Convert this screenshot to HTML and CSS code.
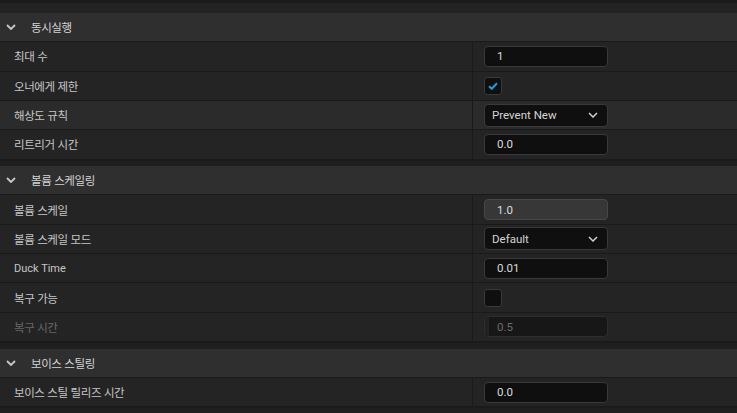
FILE: index.html
```html
<!DOCTYPE html>
<html lang="ko">
<head>
<meta charset="utf-8">
<title>Details</title>
<link rel="stylesheet" href="styles.css">
</head>
<body>
<div class="panel">
  <div class="topbar"></div>

  <section class="group">
    <div class="group-head">
      <svg class="chev" viewBox="0 0 10 6" width="10" height="6"><path d="M1 1 L5 5 L9 1" fill="none" stroke="#c8c8c8" stroke-width="1.8"/></svg>
      <span class="ko">동시실행</span>
    </div>
    <div class="row">
      <div class="name ko">최대 수</div>
      <div class="value"><div class="field">1</div></div>
    </div>
    <div class="row">
      <div class="name ko">오너에게 제한</div>
      <div class="value"><div class="check on"><svg viewBox="0 0 10 8" width="10" height="8"><path d="M1 4.2 L3.8 6.8 L9 1.3" fill="none" stroke="#2a9ad6" stroke-width="2"/></svg></div></div>
    </div>
    <div class="row hover">
      <div class="name ko">해상도 규칙</div>
      <div class="value"><div class="combo"><span>Prevent New</span><svg viewBox="0 0 10 6" width="10" height="6"><path d="M1 1 L5 5 L9 1" fill="none" stroke="#cfcfcf" stroke-width="1.5"/></svg></div></div>
    </div>
    <div class="row">
      <div class="name ko">리트리거 시간</div>
      <div class="value"><div class="field">0.0</div></div>
    </div>
  </section>

  <div class="spacer"></div>

  <section class="group">
    <div class="group-head">
      <svg class="chev" viewBox="0 0 10 6" width="10" height="6"><path d="M1 1 L5 5 L9 1" fill="none" stroke="#c8c8c8" stroke-width="1.8"/></svg>
      <span class="ko">볼륨 스케일링</span>
    </div>
    <div class="row">
      <div class="name ko">볼륨 스케일</div>
      <div class="value"><div class="field locked">1.0</div></div>
    </div>
    <div class="row">
      <div class="name ko">볼륨 스케일 모드</div>
      <div class="value"><div class="combo"><span>Default</span><svg viewBox="0 0 10 6" width="10" height="6"><path d="M1 1 L5 5 L9 1" fill="none" stroke="#cfcfcf" stroke-width="1.5"/></svg></div></div>
    </div>
    <div class="row">
      <div class="name latin">Duck Time</div>
      <div class="value"><div class="field">0.01</div></div>
    </div>
    <div class="row">
      <div class="name ko">복구 가능</div>
      <div class="value"><div class="check"></div></div>
    </div>
    <div class="row">
      <div class="name ko disabled">복구 시간</div>
      <div class="value"><div class="field off">0.5</div></div>
    </div>
  </section>

  <div class="spacer"></div>

  <section class="group">
    <div class="group-head">
      <svg class="chev" viewBox="0 0 10 6" width="10" height="6"><path d="M1 1 L5 5 L9 1" fill="none" stroke="#c8c8c8" stroke-width="1.8"/></svg>
      <span class="ko">보이스 스틸링</span>
    </div>
    <div class="row">
      <div class="name ko">보이스 스틸 릴리즈 시간</div>
      <div class="value"><div class="field">0.0</div></div>
    </div>
  </section>
  <div class="spacer"></div>
</div>
</body>
</html>
```

FILE: styles.css
```css
html, body {
  margin: 0;
  padding: 0;
  background: #1d1d1d;
  height: 100%;
  overflow: hidden;
}

.panel {
  font-family: Roboto, "Noto Sans CJK KR", sans-serif;
  font-size: 12px;
  color: #c6c6c6;
  display: flex;
  flex-direction: column;
}

.topbar {
  height: 13px;
  box-sizing: border-box;
  border-top: 3px solid #1b1b1b;
  background: #232323;
}

.ko {
  font-family: "Noto Sans CJK KR", sans-serif;
  font-size: 11.5px;
  letter-spacing: -0.4px;
}

.latin {
  font-family: Roboto, sans-serif;
  font-size: 11px;
}

.group {
  display: flex;
  flex-direction: column;
}

.group-head {
  height: 29.333px;
  box-sizing: border-box;
  border-bottom: 1px solid #1a1a1a;
  background: #2f2f2f;
  display: flex;
  align-items: center;
  color: #d4d4d4;
}

.chev {
  margin-left: 6px;
  margin-right: 15px;
}

.row {
  height: 29.333px;
  box-sizing: border-box;
  border-bottom: 1px solid #1a1a1a;
  background: #242424;
  display: grid;
  grid-template-columns: 473px 1fr;
}

.row.hover {
  background: #2b2b2b;
}

.name {
  display: flex;
  align-items: center;
  padding-left: 14px;
  border-right: 1px solid #1a1a1a;
  color: #c6c6c6;
}

.name.disabled {
  color: #676767;
}

.value {
  display: flex;
  align-items: center;
  padding-left: 11px;
}

.field {
  width: 124px;
  height: 21px;
  box-sizing: border-box;
  background: #0f0f0f;
  border: 1px solid #393939;
  border-radius: 4px;
  display: flex;
  align-items: center;
  padding-left: 12px;
  color: #dcdcdc;
  font-family: Roboto, sans-serif;
  font-size: 11.5px;
  position: relative;
}

.field.locked {
  background: #373737;
  border-color: #474747;
}

.field.off {
  background: #171717;
  border-color: #2d2d2d;
  color: #6b6b6b;
}

.field.off::before {
  content: "";
  position: absolute;
  left: 0;
  top: 0;
  bottom: 0;
  width: 4px;
  background: #222;
  border-radius: 3px 0 0 3px;
}

.combo {
  width: 124px;
  height: 23px;
  box-sizing: border-box;
  background: #0f0f0f;
  border: 1px solid #393939;
  border-radius: 4px;
  display: flex;
  align-items: center;
  justify-content: space-between;
  padding: 0 9px 0 7px;
  color: #d4d4d4;
  font-family: Roboto, sans-serif;
  font-size: 11.5px;
}

.check {
  width: 18px;
  height: 18px;
  box-sizing: border-box;
  background: #0f0f0f;
  border: 1px solid #393939;
  border-radius: 3px;
  display: flex;
  align-items: center;
  justify-content: center;
}

.spacer {
  height: 6.5px;
  box-sizing: border-box;
  border-top: 1px solid #1b1b1b;
  background: #1f1f1f;
}
```
